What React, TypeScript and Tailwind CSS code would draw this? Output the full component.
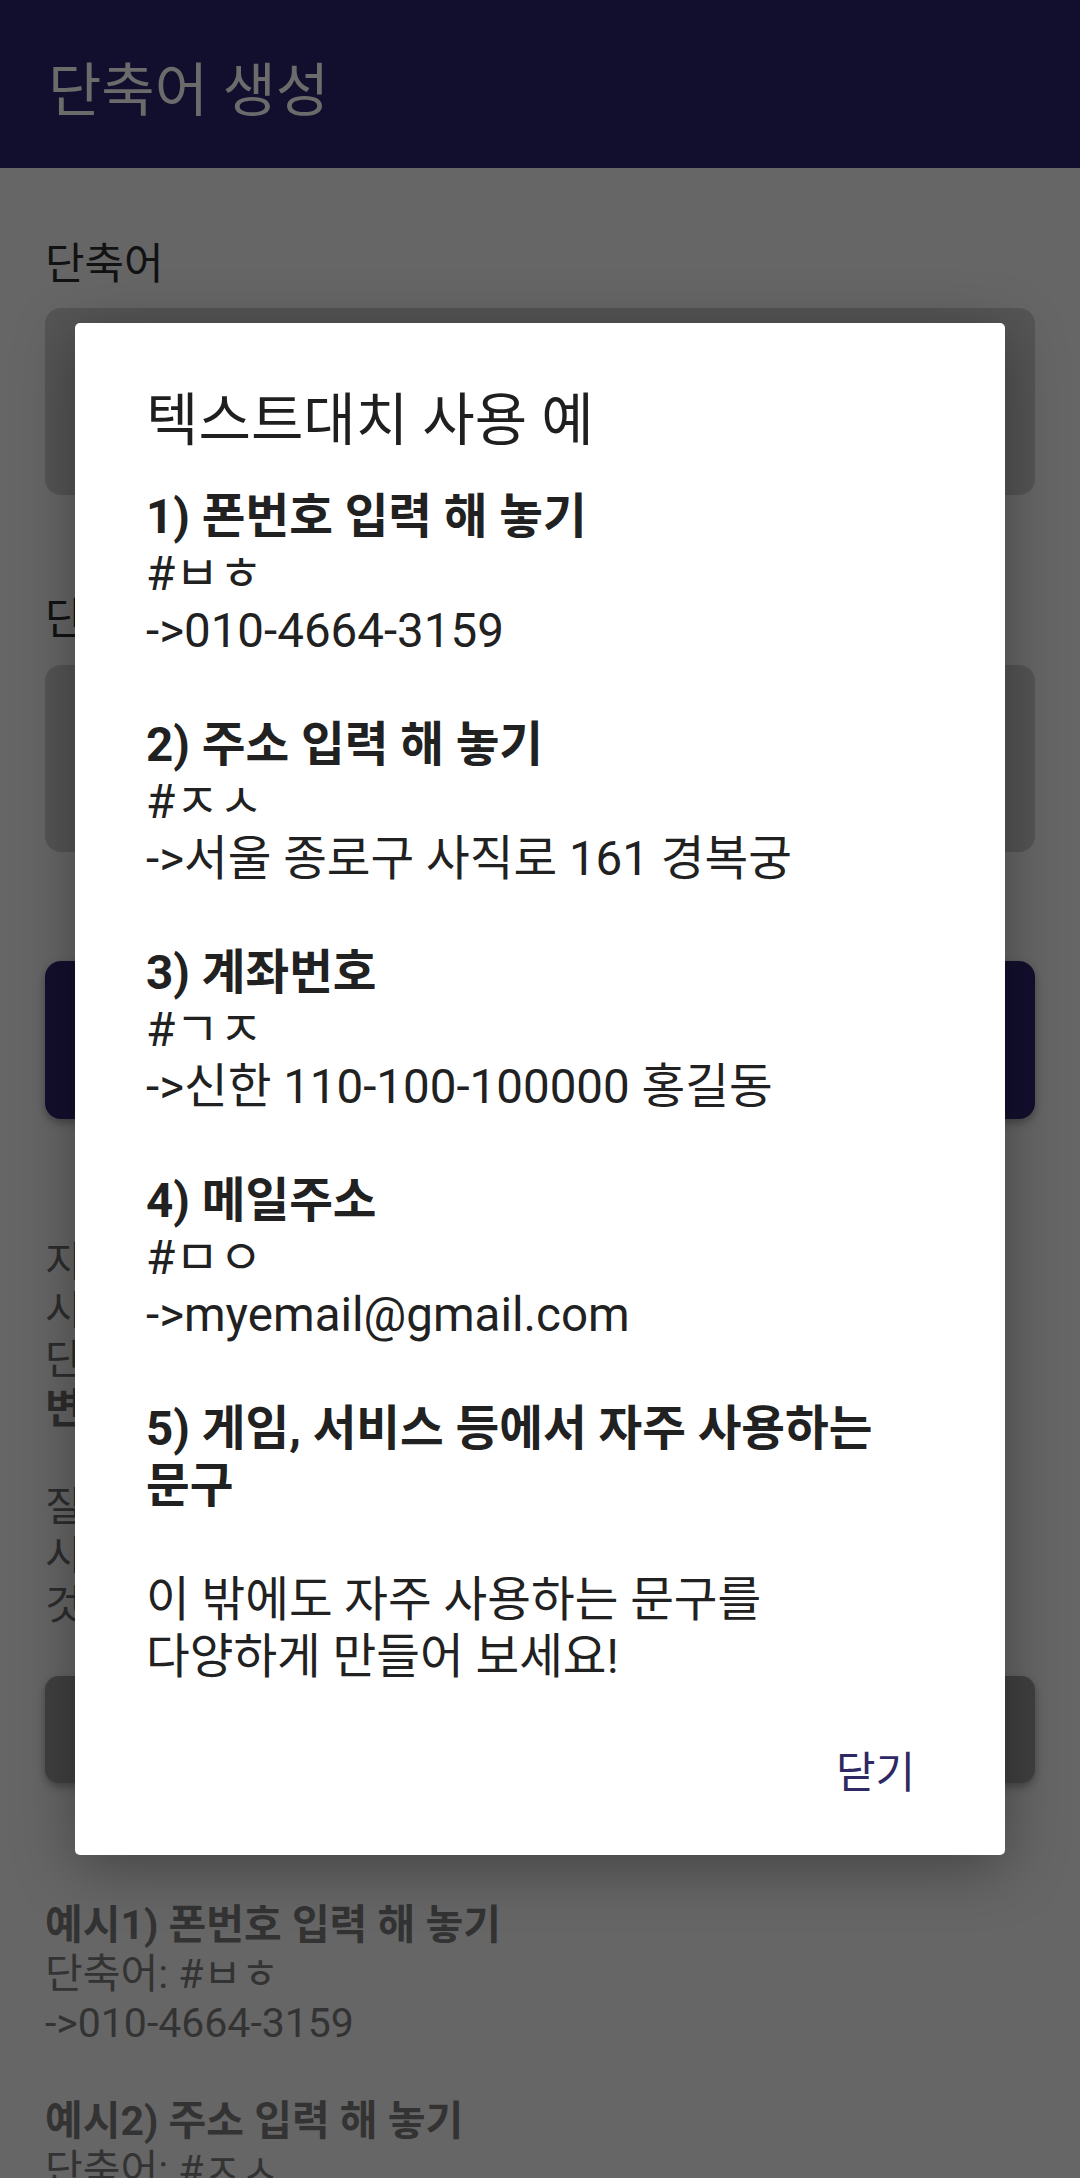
const font = "font-['Roboto','Noto_Sans_CJK_KR',sans-serif]";

type Line = { text: string; bold?: boolean };

const examples: Line[] = [
  { text: "1) 폰번호 입력 해 놓기", bold: true },
  { text: "#ㅂㅎ" },
  { text: "->010-4664-3159" },
  { text: "" },
  { text: "2) 주소 입력 해 놓기", bold: true },
  { text: "#ㅈㅅ" },
  { text: "->서울 종로구 사직로 161 경복궁" },
  { text: "" },
  { text: "3) 계좌번호", bold: true },
  { text: "#ㄱㅈ" },
  { text: "->신한 110-100-100000 홍길동" },
  { text: "" },
  { text: "4) 메일주소", bold: true },
  { text: "#ㅁㅇ" },
  { text: "->myemail@gmail.com" },
  { text: "" },
  { text: "5) 게임, 서비스 등에서 자주 사용하는 문구", bold: true },
  { text: "" },
];

const guide: Line[] = [
  { text: "지정한 단축어를 입력하면" },
  { text: "시스템 어디에서나 자동으로" },
  { text: "단축어 대신 문장이 입력됩니다." },
  { text: "변경 내용은 바로 적용됩니다.", bold: true },
  { text: "" },
  { text: "질문이나 요청사항이 있으시면 개발자 이메일로 문의를" },
  { text: "시간이 날 때마다 확인하고" },
  { text: "것이 있다면 알려 주세요." },
];

const samples: Line[] = [
  { text: "예시1) 폰번호 입력 해 놓기", bold: true },
  { text: "단축어: #ㅂㅎ" },
  { text: "->010-4664-3159" },
  { text: "" },
  { text: "예시2) 주소 입력 해 놓기", bold: true },
  { text: "단축어: #ㅈㅅ" },
  { text: "->서울 종로구 사직로 161 경복궁" },
];

function TextLines({ lines, className }: { lines: Line[]; className: string }) {
  return (
    <div className={className}>
      {lines.map((l, i) =>
        l.text ? (
          <div key={i} className={l.bold ? "font-bold" : ""}>
            {l.text}
          </div>
        ) : (
          <div key={i}>&nbsp;</div>
        )
      )}
    </div>
  );
}

export default function App() {
  return (
    <div className={`relative w-[1080px] h-[2178px] overflow-hidden bg-[#666666] ${font}`}>
      {/* page under the scrim */}
      <header className="h-[168px] bg-[#120e2e] pl-[48px] pt-[58px]">
        <h1 className="text-[58px] leading-[66px] text-[#6b6b6b]">단축어 생성</h1>
      </header>

      <main className="px-[45px]">
        <div className="mt-[71px] text-[43px] leading-[50px] text-[#121212]">단축어</div>
        <div className="mt-[19px] h-[187px] rounded-[16px] bg-[#555555]" />

        <div className="mt-[99px] text-[43px] leading-[50px] text-[#121212]">단축어 내용</div>
        <div className="mt-[21px] h-[187px] rounded-[16px] bg-[#555555]" />

        <button className="mt-[109px] flex h-[158px] w-full items-center justify-center rounded-[16px] bg-[#130f2e] text-[43px] text-[#666666] shadow-[0_4px_8px_rgba(0,0,0,0.3)]">
          저장
        </button>

        <TextLines
          lines={guide}
          className="mt-[119px] whitespace-nowrap text-[41px] leading-[49px] text-[#2d2d2d]"
        />

        <div className="mt-[46px] h-[107px] rounded-[14px] bg-[#404040] shadow-[0_4px_8px_rgba(0,0,0,0.3)]" />

        <TextLines
          lines={samples}
          className="mt-[118px] whitespace-nowrap text-[41px] leading-[49px] text-[#333333]"
        />
      </main>

      {/* dialog */}
      <div className="absolute inset-0 flex items-center justify-center">
        <div className="w-[930px] rounded-[5px] bg-white shadow-[0_12px_60px_rgba(0,0,0,0.35)]">
          <div className="px-[71px] pt-[68px]">
            <h2 className="text-[57px] leading-[60px] text-[#1f1f1f]">텍스트대치 사용 예</h2>
            <div className="mt-[38px] break-keep text-[47.5px] leading-[57px] text-[#212121]">
              <TextLines lines={examples} className="" />
              <div>
                이 밖에도 자주 사용하는 문구를
                <br />
                다양하게 만들어 보세요!
              </div>
            </div>
          </div>
          <div className="mt-[38px] flex justify-end pb-[32px] pr-[68px]">
            <button className="h-[99px] px-[22px] text-[43px] text-[#2f2963]">닫기</button>
          </div>
        </div>
      </div>
    </div>
  );
}
